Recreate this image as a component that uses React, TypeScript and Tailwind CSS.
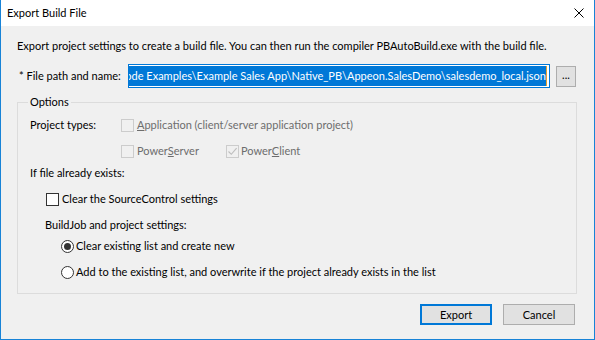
import React from 'react';

const PATH =
  'C:\\Users\\Public\\Documents\\Appeon\\PowerBuilder 2019\\Code Examples\\Example Sales App\\Native_PB\\Appeon.SalesDemo\\salesdemo_local.json';

function CheckBox({ checked, disabled }: { checked?: boolean; disabled?: boolean }) {
  return (
    <span
      className={`flex h-[13px] w-[13px] shrink-0 items-center justify-center border ${
        disabled ? 'border-[#cccccc] bg-[#f0f0f0]' : 'border-[#333333] bg-white'
      }`}
    >
      {checked && (
        <svg width="11" height="11" viewBox="0 0 11 11">
          <path d="M1.5 5.5 L4.3 8.3 L9.6 2.2" fill="none" stroke={disabled ? '#bdbdbd' : '#000'} strokeWidth="1.1" />
        </svg>
      )}
    </span>
  );
}

function Radio({ checked }: { checked?: boolean }) {
  return (
    <span className="flex h-[13px] w-[13px] shrink-0 items-center justify-center rounded-full border border-[#333333] bg-white">
      {checked && <span className="h-[7px] w-[7px] rounded-full bg-[#333333]" />}
    </span>
  );
}

function Btn({ children, primary, className = '' }: { children: React.ReactNode; primary?: boolean; className?: string }) {
  return (
    <button
      className={`flex items-center justify-center bg-[#e1e1e1] ${
        primary ? 'border-2 border-[#0078d7]' : 'border border-[#adadad]'
      } ${className}`}
    >
      {children}
    </button>
  );
}

export default function App() {
  return (
    <div className="flex h-[340px] w-[595px] flex-col border-x border-b border-[#1883d7] font-['Lato',sans-serif] text-[11px] leading-[16px] text-black">
      {/* title bar */}
      <div className="flex h-[26px] shrink-0 items-center justify-between bg-white pl-[6px] pr-[10px]">
        <span>Export Build File</span>
        <svg width="10" height="10" viewBox="0 0 10 10">
          <path d="M0.5 0.5 L9.5 9.5 M9.5 0.5 L0.5 9.5" stroke="#000" strokeWidth="1" />
        </svg>
      </div>

      <div className="flex flex-1 flex-col bg-[#f0f0f0] pl-[16px] pr-[17px] pt-[12px]">
        <p className="whitespace-nowrap">
          Export project settings to create a build file. You can then run the compiler PBAutoBuild.exe with the build file.
        </p>

        <div className="mt-[10px] flex h-[24px] items-center">
          <span className="w-[111px] shrink-0 pl-[2px]">* File path and name:</span>
          <div className="flex h-[24px] w-[422px] shrink-0 items-stretch justify-end overflow-hidden border border-[#0078d7] bg-white p-[1px] pr-[2px]">
            <span className="shrink-0 whitespace-nowrap bg-[#0078d7] leading-[20px] text-white">{PATH}</span>
            <span className="w-px shrink-0 bg-[#e0a030]" />
          </div>
          <Btn className="ml-[6px] h-[21px] w-[20px] pb-[3px]">...</Btn>
        </div>

        <fieldset className="mt-[6px] border border-[#dcdcdc] pb-[13px]">
          <legend className="ml-[10px] px-[2px]">Options</legend>

          <div className="mt-[7px] flex h-[16px] items-center">
            <span className="w-[103px] shrink-0 pl-[12px]">Project types:</span>
            <CheckBox disabled />
            <span className="ml-[3px] text-[#6d6d6d]">
              <u>A</u>pplication (client/server application project)
            </span>
          </div>

          <div className="mt-[10px] flex h-[16px] items-center pl-[103px]">
            <div className="flex w-[105px] items-center">
              <CheckBox disabled />
              <span className="ml-[3px] text-[#6d6d6d]">
                Power<u>S</u>erver
              </span>
            </div>
            <CheckBox disabled checked />
            <span className="ml-[2px] text-[#6d6d6d]">
              Power<u>C</u>lient
            </span>
          </div>

          <div className="mt-[6px] h-[16px] pl-[12px]">If file already exists:</div>

          <div className="mt-[10px] flex h-[16px] items-center pl-[28px]">
            <CheckBox />
            <span className="ml-[3px]">Clear the SourceControl settings</span>
          </div>

          <div className="mt-[10px] h-[16px] pl-[27px]">BuildJob and project settings:</div>

          <div className="mt-[5px] flex h-[16px] items-center pl-[43px]">
            <Radio checked />
            <span className="ml-[2px]">Clear existing list and create new</span>
          </div>

          <div className="mt-[10px] flex h-[16px] items-center pl-[43px]">
            <Radio />
            <span className="ml-[2px]">Add to the existing list, and overwrite if the project already exists in the list</span>
          </div>
        </fieldset>

        <div className="mt-[10px] flex justify-end gap-[11px] pr-[2px]">
          <Btn primary className="h-[21px] w-[72px]">Export</Btn>
          <Btn className="h-[21px] w-[72px]">Cancel</Btn>
        </div>
      </div>
    </div>
  );
}
